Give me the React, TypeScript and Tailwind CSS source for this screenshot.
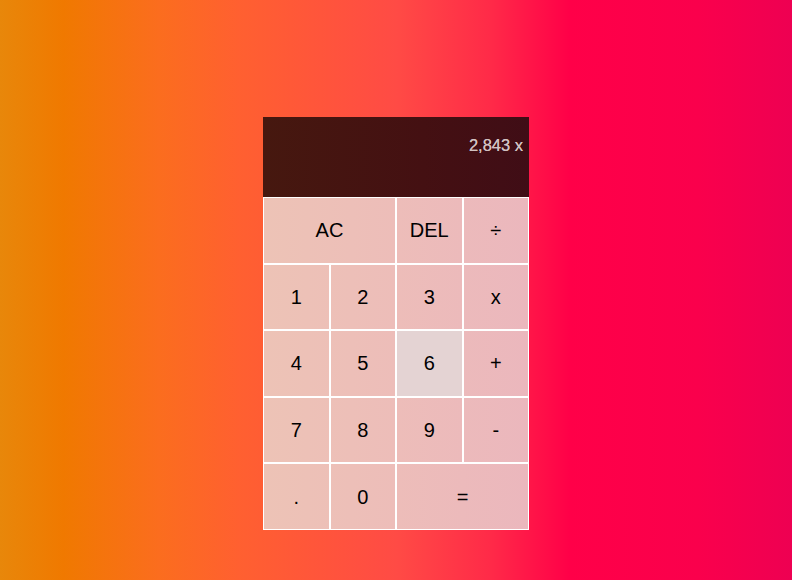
import React from 'react';

const keys: { label: string; span?: boolean; hover?: boolean }[] = [
  { label: 'AC', span: true },
  { label: 'DEL' },
  { label: '÷' },
  { label: '1' },
  { label: '2' },
  { label: '3' },
  { label: 'x' },
  { label: '4' },
  { label: '5' },
  { label: '6', hover: true },
  { label: '+' },
  { label: '7' },
  { label: '8' },
  { label: '9' },
  { label: '-' },
  { label: '.' },
  { label: '0' },
  { label: '=', span: true },
];

export default function App() {
  return (
    <div className="min-h-[580px] w-full bg-[linear-gradient(to_right,#e8870a_0%,#f07900_8%,#fb6d1e_20%,#ff6030_30%,#ff4b45_50%,#ff2a48_62%,#ff0048_72%,#fa004c_88%,#ee0052_100%)] flex justify-center pt-[117px] font-['Liberation_Sans',Arial,sans-serif]">
      <div className="flex flex-col w-[266px]">
        {/* display */}
        <div className="h-[80px] bg-[linear-gradient(to_right,#46180f,#441012_60%,#400d16)] flex flex-col items-end px-[6px] pt-[20px]">
          <div className="text-[16.5px] text-[#d2c2c2] leading-none [text-shadow:0_0_0.4px_#d2c2c2]">2,843 x</div>
        </div>

        {/* keypad */}
        <div className="grid grid-cols-4 auto-rows-[66.6px] bg-[linear-gradient(to_right,#edc3b6,#edbdb9_50%,#ebb7bd)]">
          {keys.map((k) => (
            <button
              key={k.label}
              className={
                'border border-white text-[20px] text-black flex items-center justify-center leading-none ' +
                (k.span ? 'col-span-2 ' : '') +
                (k.hover ? 'bg-[#e4d3d3]' : 'bg-transparent')
              }
            >
              {k.label}
            </button>
          ))}
        </div>
      </div>
    </div>
  );
}
